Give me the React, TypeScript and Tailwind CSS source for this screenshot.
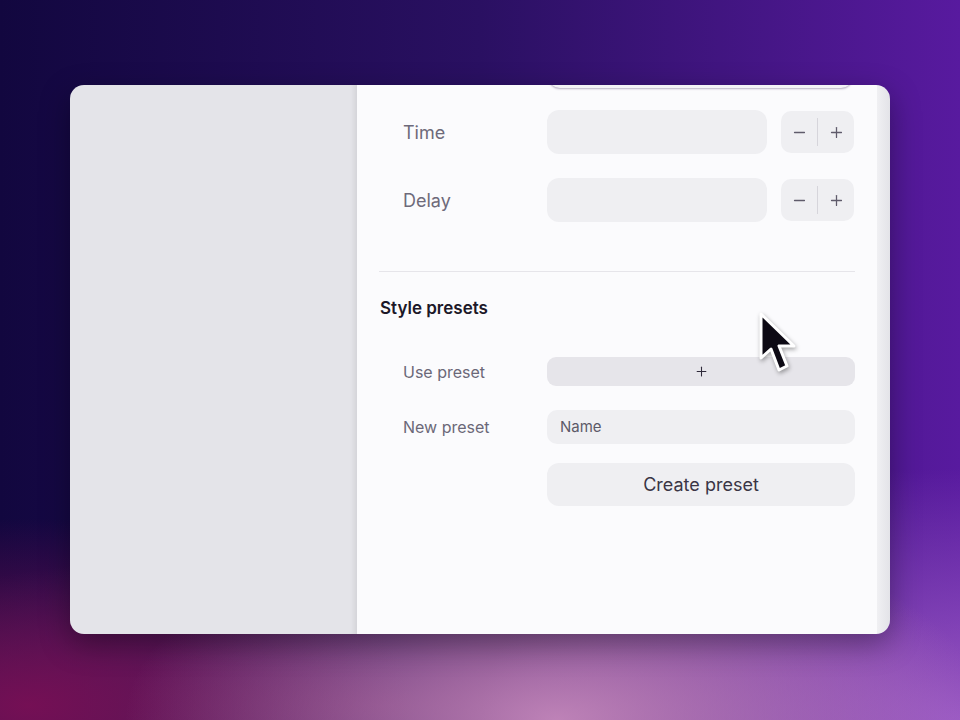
import { Minus, Plus } from "lucide-react";

function Stepper() {
  return (
    <div className="flex h-[42px] w-[73px] items-center rounded-[10px] bg-[#efeff2] text-[#5f5b6b]">
      <button className="flex h-full flex-1 items-center justify-center">
        <Minus size={17} strokeWidth={1.8} />
      </button>
      <div className="h-[28px] w-px bg-[#d6d5db]" />
      <button className="flex h-full flex-1 items-center justify-center">
        <Plus size={17} strokeWidth={1.8} />
      </button>
    </div>
  );
}

function NumberRow({ label, className }: { label: string; className?: string }) {
  return (
    <div className={"flex items-center pl-[24px] " + (className ?? "")}>
      <span className="w-[144px] text-[18px] text-[#6e6a7a]">{label}</span>
      <div className="h-[44px] w-[220px] rounded-[12px] bg-[#efeff2]" />
      <div className="ml-[14px]">
        <Stepper />
      </div>
    </div>
  );
}

function Cursor() {
  return (
    <svg
      className="pointer-events-none absolute left-[758px] top-[311px] drop-shadow-[1px_2px_2px_rgba(0,0,0,0.35)]"
      width="44"
      height="66"
      viewBox="-3 -3 44 66"
    >
      <path
        d="M0 0 L0 44 L10 35 L18 56 L26 52 L18 32 L33 32 Z"
        fill="#0d0a14"
        stroke="#fff"
        strokeWidth="3"
        strokeLinejoin="round"
      />
    </svg>
  );
}

export default function App() {
  return (
    <div
      className="relative h-[720px] w-[960px] overflow-hidden bg-[radial-gradient(ellipse_45%_28%_at_58%_100%,rgba(200,140,190,0.9),transparent),radial-gradient(ellipse_40%_26%_at_3%_98%,rgba(120,15,85,0.95),transparent),radial-gradient(ellipse_50%_35%_at_100%_100%,rgba(160,95,200,0.9),transparent),radial-gradient(ellipse_70%_22%_at_40%_98%,rgba(120,50,110,0.7),transparent),linear-gradient(to_right,#12073f,#2a1062_50%,#581a9f)]"
      style={{ fontFamily: "Inter, 'Noto Sans', sans-serif" }}
    >
      <div className="absolute left-[70px] top-[85px] flex h-[549px] w-[820px] overflow-hidden rounded-[14px] shadow-[0_10px_30px_rgba(0,0,0,0.35)]">
        {/* sidebar */}
        <div className="w-[287px] shrink-0 bg-[#e4e4e9] shadow-[inset_-6px_0_5px_-3px_rgba(0,0,0,0.07)]" />

        {/* content */}
        <div className="flex flex-1 flex-col bg-[#fbfbfd] px-[22px]">
          <div className="ml-[169px] mt-[-41px] h-[44px] w-[305px] shrink-0 rounded-[12px] bg-[#f3f3f6] shadow-[0_1px_2px_rgba(60,40,90,0.35)]" />

          <NumberRow label="Time" className="mt-[22px]" />
          <NumberRow label="Delay" className="mt-[24px]" />

          <div className="mt-[49px] h-px w-full bg-[#e6e5ea]" />

          <h2 className="ml-px mt-[24px] text-[17px] font-semibold leading-[24px] text-[#1c1828]">
            Style presets
          </h2>

          <div className="mt-[37px] flex items-center pl-[24px]">
            <span className="w-[144px] text-[16px] leading-[20px] text-[#6b6878]">Use preset</span>
            <button className="flex h-[29px] w-[308px] items-center justify-center rounded-[9px] bg-[#e6e5ea] text-[#2f2a3a]">
              <Plus size={15} strokeWidth={1.7} />
            </button>
          </div>

          <div className="mt-[24px] flex items-center pl-[24px]">
            <span className="w-[144px] text-[16px] leading-[20px] text-[#6b6878]">New preset</span>
            <div className="flex h-[34px] w-[308px] items-center rounded-[10px] bg-[#efeff2] px-[13px] text-[15px] text-[#5c5a68]">
              Name
            </div>
          </div>

          <div className="mt-[19px] flex pl-[168px]">
            <button className="flex h-[43px] w-[308px] items-center justify-center rounded-[12px] bg-[#efeff2] text-[18px] text-[#3a3545]">
              Create preset
            </button>
          </div>
        </div>

        {/* scroll track */}
        <div className="w-[13px] shrink-0 bg-[linear-gradient(to_right,#f0f0f3,#e3e3e8)]" />
      </div>

      <Cursor />
    </div>
  );
}
